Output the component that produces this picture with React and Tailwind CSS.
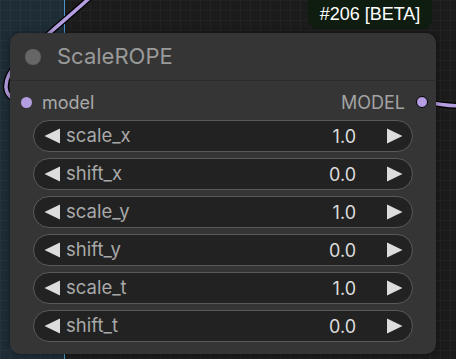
import React from 'react';

const widgets = [
    { name: 'scale_x', value: '1.0' },
    { name: 'shift_x', value: '0.0' },
    { name: 'scale_y', value: '1.0' },
    { name: 'shift_y', value: '0.0' },
    { name: 'scale_t', value: '1.0' },
    { name: 'shift_t', value: '0.0' },
];

function Arrow({ dir }) {
    return (
        <svg width="16" height="16" viewBox="0 0 16 16" className="shrink-0">
            {dir === 'left' ? (
                <polygon points="16,0.5 16,15.5 0.5,8" fill="#dddddd" />
            ) : (
                <polygon points="0,0.5 0,15.5 15.5,8" fill="#dddddd" />
            )}
        </svg>
    );
}

function NumberWidget({ name, value }) {
    return (
        <div className="flex h-[32px] items-center rounded-full border border-[#5a5a5a] bg-[#222222] pl-[10px] pr-[9px]">
            <Arrow dir="left" />
            <span className="ml-[6px] flex-1 text-[18.5px] text-[#a9a9a9]">{name}</span>
            <span className="text-[18px] text-[#dcdcdc]">{value}</span>
            <span className="ml-[31px]">
                <Arrow dir="right" />
            </span>
        </div>
    );
}

export default function App() {
    return (
        <div className="relative h-[359px] w-[456px] overflow-hidden bg-[#1b1b1b] bg-[linear-gradient(#222222_1px,transparent_1px),linear-gradient(90deg,#222222_1px,transparent_1px)] bg-size-[10px_10px] font-['Inter','Noto_Sans',sans-serif]">
            {/* group area on the left */}
            <div className="absolute left-0 top-0 h-full w-[65px] border-r border-[#4a93c6] bg-[#1e2c36] bg-[linear-gradient(#24333d_1px,transparent_1px),linear-gradient(90deg,#24333d_1px,transparent_1px)] bg-size-[10px_10px]" />

            {/* links */}
            <svg className="absolute left-0 top-0" width="456" height="359">
                <path d="M 94 -6 C 70 16, 40 40, 18 62 C 2 80, 0 98, 24 103" fill="none" stroke="#000" strokeWidth="6" />
                <path d="M 94 -6 C 70 16, 40 40, 18 62 C 2 80, 0 98, 24 103" fill="none" stroke="#b49de0" strokeWidth="3.5" />
                <path d="M 424 103 C 438 103, 446 106, 462 106" fill="none" stroke="#000" strokeWidth="6" />
                <path d="M 424 103 C 438 103, 446 106, 462 106" fill="none" stroke="#b49de0" strokeWidth="3.5" />
            </svg>

            {/* badge */}
            <div className="absolute left-[308px] top-0 flex h-[29px] w-[124px] items-center justify-center rounded-b-[10px] bg-[#0f1c10] font-['Liberation_Sans',sans-serif] text-[18px] text-white">
                #206 [BETA]
            </div>

            {/* node */}
            <div className="absolute left-[10px] top-[33px] w-[426px] rounded-[10px] bg-[#353535] pb-[12px] shadow-[0_0_6px_rgba(0,0,0,0.4)]">
                <div className="flex h-[48px] items-center border-b border-[#2c2c2c] pl-[15px]">
                    <span className="h-[16px] w-[16px] rounded-full bg-[#666666]" />
                    <span className="ml-[16px] text-[22px] text-[#9a9a9a]">ScaleROPE</span>
                </div>

                <div className="mt-[4px] flex h-[34px] items-center pl-[11px] pr-[8px]">
                    <span className="h-[11px] w-[11px] rounded-full bg-[#b49de0]" />
                    <span className="ml-[10px] flex-1 text-[18px] text-[#a9a9a9]">model</span>
                    <span className="text-[18px] text-[#a3a3a3]">MODEL</span>
                    <span className="ml-[11px] h-[12px] w-[12px] rounded-full border-[1.5px] border-black bg-[#b49de0]" />
                </div>

                <div className="mt-[1px] flex flex-col gap-[6px] pl-[23px] pr-[23px]">
                    {widgets.map((w) => (
                        <NumberWidget key={w.name} name={w.name} value={w.value} />
                    ))}
                </div>
            </div>
        </div>
    );
}
